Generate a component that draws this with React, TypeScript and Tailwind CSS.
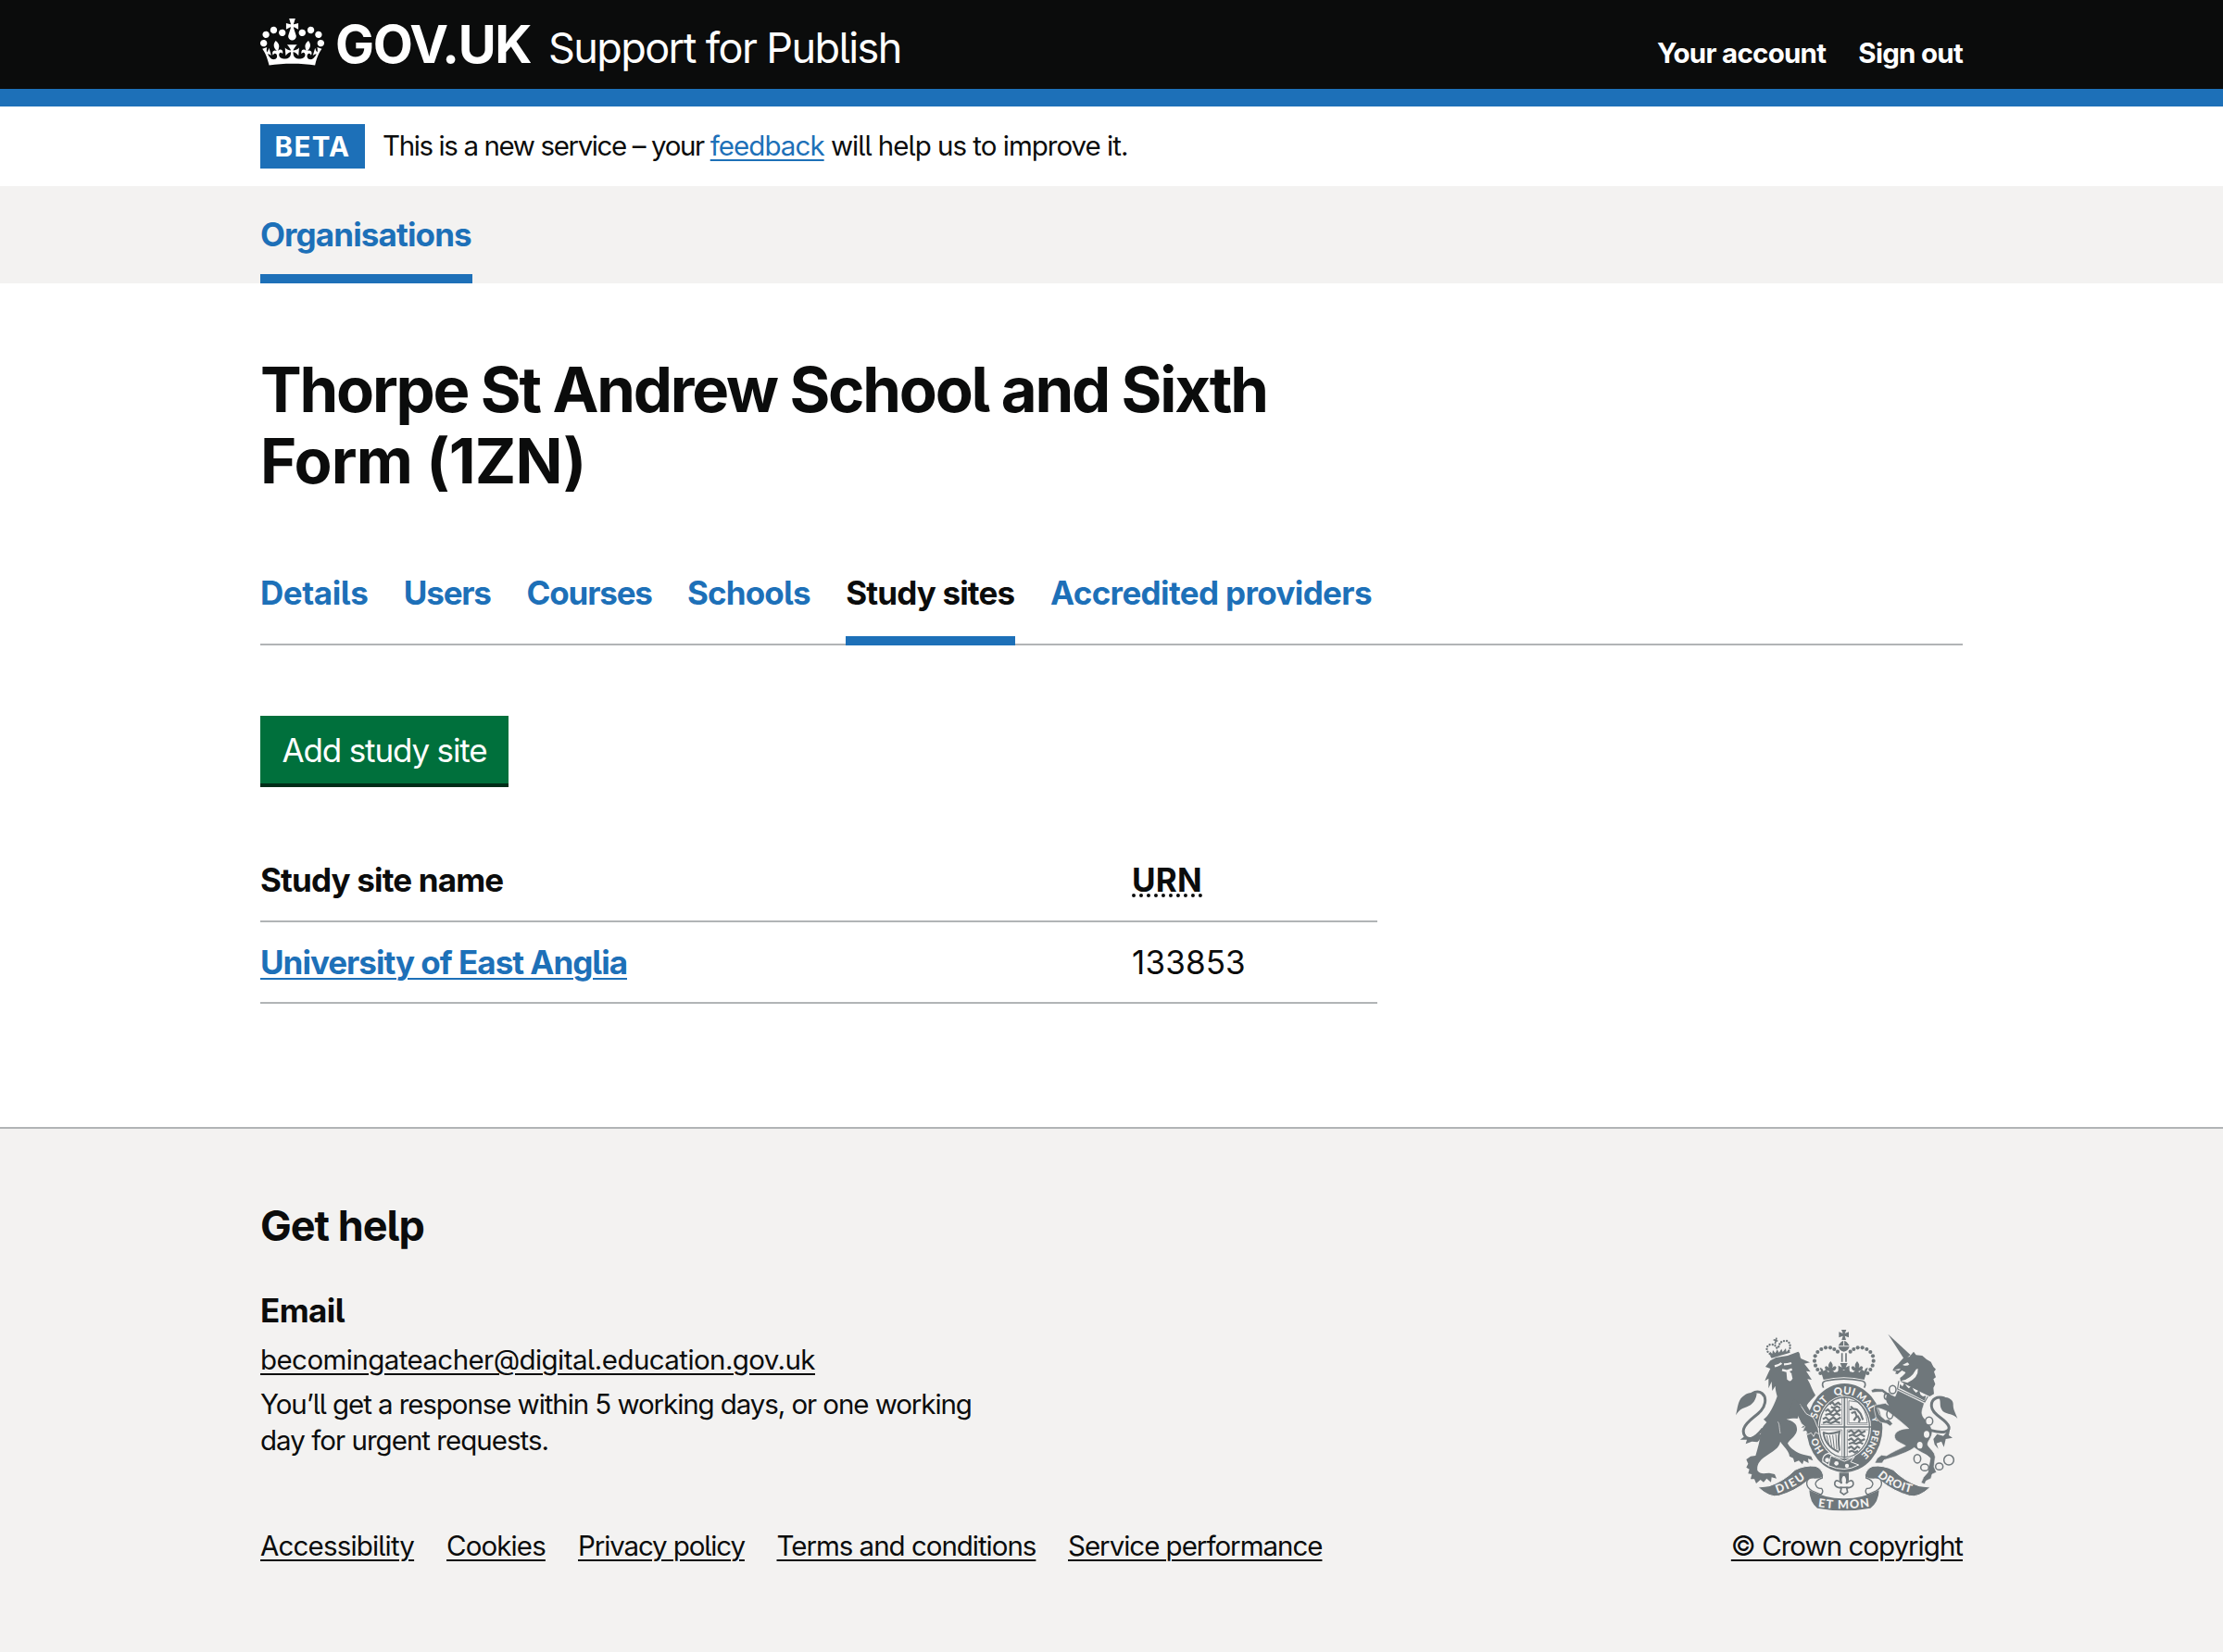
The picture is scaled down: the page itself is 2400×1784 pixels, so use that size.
import type { ReactNode } from "react";

const serviceLinks = ["Your account", "Sign out"];

const tabs = [
  { label: "Details", width: "w-[116.5px]", tracking: "tracking-[-0.012em]" },
  { label: "Users", width: "w-[94.5px]", tracking: "tracking-[-0.034em]" },
  { label: "Courses", width: "w-[135px]", tracking: "tracking-[-0.034em]" },
  { label: "Schools", width: "w-[133px]", tracking: "tracking-[-0.024em]" },
  { label: "Study sites", width: "w-[182.5px]", tracking: "tracking-[-0.024em]", current: true },
  { label: "Accredited providers", width: "w-[348px]", tracking: "tracking-[-0.018em]" },
];

const footerLinks = [
  { label: "Accessibility", tracking: "tracking-[-0.028em]", width: "w-[166px]" },
  { label: "Cookies", tracking: "tracking-[-0.03em]", width: "w-[107px]" },
  { label: "Privacy policy", tracking: "tracking-[-0.038em]", width: "w-[179.5px]" },
  { label: "Terms and conditions", tracking: "tracking-[-0.0345em]", width: "w-[279.5px]" },
  { label: "Service performance", tracking: "tracking-[-0.0345em]", width: "w-[275px]" },
];

const Container = ({ children, className = "" }: { children: ReactNode; className?: string }) => (
  <div className={`mx-auto w-[1838px] ${className}`}>{children}</div>
);

const Crown = () => (
  <svg viewBox="0 0 132 97" preserveAspectRatio="none" className="mt-[20px] h-[51px] w-[69px] shrink-0 self-start fill-white" aria-hidden="true">
    <path
      fillRule="evenodd"
      d="M25 30.2c3.5 1.5 7.7-.2 9.1-3.7 1.5-3.6-.2-7.8-3.9-9.2-3.6-1.4-7.6.3-9.1 3.9-1.4 3.5.3 7.5 3.9 9zM9 39.5c3.6 1.5 7.8-.2 9.2-3.7 1.5-3.6-.2-7.8-3.9-9.1-3.6-1.5-7.6.2-9.1 3.8-1.4 3.5.3 7.5 3.8 9zM4.4 57.2c3.5 1.5 7.7-.2 9.1-3.8 1.5-3.6-.2-7.7-3.9-9.1-3.5-1.5-7.6.3-9.1 3.8-1.4 3.5.3 7.6 3.9 9.1zm38.3-21.4c3.5 1.5 7.7-.2 9.1-3.8 1.5-3.6-.2-7.7-3.9-9.1-3.6-1.5-7.6.3-9.1 3.8-1.3 3.6.4 7.7 3.9 9.1zm64.4-5.6c-3.6 1.5-7.8-.2-9.1-3.7-1.5-3.6.2-7.8 3.8-9.2 3.6-1.4 7.7.3 9.2 3.9 1.3 3.5-.4 7.5-3.9 9zm15.9 9.3c-3.6 1.5-7.7-.2-9.1-3.7-1.5-3.6.2-7.8 3.7-9.1 3.6-1.5 7.7.2 9.2 3.8 1.5 3.5-.3 7.5-3.8 9zm4.7 17.7c-3.6 1.5-7.8-.2-9.2-3.8-1.5-3.6.2-7.7 3.9-9.1 3.6-1.5 7.7.3 9.2 3.8 1.3 3.5-.4 7.6-3.9 9.1zM89.3 35.8c-3.6 1.5-7.8-.2-9.2-3.8-1.4-3.6.2-7.7 3.9-9.1 3.6-1.5 7.7.3 9.2 3.8 1.4 3.6-.3 7.7-3.9 9.1zM69.7 17.7l8.9 4.7V9.3l-8.9 2.8c-.2-.3-.5-.6-.9-.9L72.4 0H59.6l3.5 11.2c-.3.3-.6.5-.9.9l-8.8-2.8v13.1l8.8-4.7c.3.3.6.7.9.9l-5 15.4v.1c-.2.8-.4 1.6-.4 2.4 0 4.1 3.1 7.5 7 8.1h.2c.3 0 .7.1 1 .1.4 0 .7 0 1-.1h.2c4-.6 7.1-4.1 7.1-8.1 0-.8-.1-1.7-.4-2.4V34l-5.1-15.4c.4-.2.7-.6 1-.9zM66 92.8c16.9 0 32.8 1.1 47.1 3.2 4-16.9 8.9-26.7 14-33.5l-9.6-3.4c1 4.9 1.1 7.2 0 10.2-1.5-1.4-3-4.3-4.2-8.7L108.6 76c2.8-2 5-3.2 7.5-3.3-4.4 9.4-10 11.9-13.6 11.2-4.3-.8-6.3-4.6-5.6-7.9 1-4.7 5.7-5.9 8-.5 4.3-8.7-3-11.4-7.6-8.8 7.1-7.2 7.9-13.5 2.1-21.1-8 6.1-8.1 12.3-4.5 20.8-4.7-5.4-12.1-2.5-9.5 6.2 3.4-5.2 7.9-2 7.2 3.1-.6 4.3-6.4 7.8-13.5 7.2-10.3-.9-10.9-8-11.2-13.8 2.5-.5 7.1 1.8 11 7.3L80.2 60c-4.1 4.4-8 5.3-12.3 5.4 1.4-4.4 8-11.6 8-11.6H55.5s6.4 7.2 7.9 11.6c-4.2-.1-8-1-12.3-5.4l1.4 16.4c3.9-5.5 8.5-7.7 10.9-7.3-.3 5.8-.9 12.8-11.1 13.8-7.2.6-12.9-2.9-13.5-7.2-.7-5 3.8-8.3 7.1-3.1 2.7-8.7-4.6-11.6-9.4-6.2 3.7-8.5 3.6-14.7-4.6-20.8-5.8 7.6-5 13.9 2.2 21.1-4.7-2.6-11.9.1-7.7 8.8 2.3-5.5 7.1-4.2 8.1.5.7 3.3-1.3 7.1-5.7 7.9-3.5.7-9-1.8-13.5-11.2 2.5.1 4.7 1.3 7.5 3.3l-4.7-15.4c-1.2 4.4-2.7 7.2-4.3 8.7-1.1-3-.9-5.3 0-10.2l-9.5 3.4c5 6.9 9.9 16.7 14 33.5 14.8-2.1 30.8-3.2 47.7-3.2z"
    />
  </svg>
);

const archBeads: [number, number][] = [
  [346, 187], [337, 175], [330, 162], [327, 147], [329, 131], [337, 118], [349, 109], [363, 104], [378, 104], [391, 109], [402, 117],
];

const RoyalArms = () => (
  <svg viewBox="57 40 750 600" className="h-[200px] w-[250px]" fill="#6f777b" aria-hidden="true">
    <defs>
      <path id="garter" d="M424 471A92 108 0 0 1 424 255A92 108 0 0 1 424 471" />
      <path id="dieu" d="M206 576Q262 558 306 522" />
      <path id="mon" d="M338 620Q422 632 508 618" />
      <path id="droit" d="M531 520Q572 560 652 577" />
    </defs>

    {/* lion's tail */}
    <path d="M72 323C80 292 78 272 100 258C112 248 128 248 140 254C136 282 118 294 102 298C88 302 80 310 72 323Z" />
    <path d="M124 253C150 238 172 256 166 284C160 320 110 332 98 366C92 388 108 402 122 398C136 394 146 384 160 366" fill="none" stroke="#6f777b" strokeWidth="9" />
    <path d="M92 374L102 390L86 402L108 402L104 416L124 408L142 410C150 404 154 394 158 382L140 388L112 398Z" />

    {/* lion */}
    <path d="M184 146L202 136L240 130L274 117C282 122 278 132 284 140L312 152L294 156L314 182L300 180L318 208L304 206C316 226 320 244 330 258C318 272 306 282 302 292L320 322C330 332 334 346 335 362L338 384L326 376L322 390L314 380L302 386L300 374L288 376L294 362L284 364L298 350C290 336 278 328 262 332L236 336C258 342 272 350 270 372C266 392 244 404 240 414C250 432 270 444 290 450L316 456L322 470L306 464L308 478L292 470L288 482L276 470L262 476L258 462L246 456C244 436 226 424 216 408C214 430 190 440 166 458C146 472 140 486 142 502C150 514 162 512 180 510L198 514L204 528L188 524L186 540L172 528L162 540L152 532L138 544L132 530L120 530L124 514L112 512L116 498L106 492L112 480L106 466L120 456L136 454C144 428 150 404 154 376C158 360 166 352 172 346L162 336C182 322 196 290 206 262C202 248 200 238 200 228L190 244L188 214L178 236L178 204L166 212C172 196 178 184 184 172L168 166Z" />
    <path d="M198 164Q214 160 220 154M228 158Q240 158 252 154M222 176L238 180L254 174" fill="none" stroke="#f3f2f1" strokeWidth="7" />
    <path d="M236 184L244 178L252 188L256 204Q248 220 238 206Z" fill="#f3f2f1" />
    <path d="M216 382C212 360 214 352 208 344" fill="none" stroke="#f3f2f1" strokeWidth="2" />

    {/* lion's crown */}
    <path d="M184 132L182 116L190 124L192 112L200 122L206 110L212 120L220 108L224 118L234 106L236 118L244 110L248 120L188 138Z" />
    <path d="M182 124C166 112 172 94 186 94Q200 92 206 108M244 114C254 98 244 78 230 82Q212 84 210 106" fill="none" stroke="#6f777b" strokeWidth="7" strokeLinecap="round" strokeDasharray="0.1 9" />
    <path d="M194 78L208 83M204 72L199 92" stroke="#6f777b" strokeWidth="5" />

    {/* garter and quartered shield */}
    <ellipse cx="424" cy="364" rx="123" ry="144" />
    <ellipse cx="424" cy="362" rx="86" ry="102" fill="#f3f2f1" />
    <ellipse cx="424" cy="362" rx="81" ry="97" fill="none" stroke="#6f777b" strokeWidth="4" />
    <path d="M424 262V462M338 361H510" stroke="#6f777b" strokeWidth="5" />
    <path d="M416 268V353H348M433 268V353H500M416 370V456M348 370H416M433 370H500M433 370V456" fill="none" stroke="#6f777b" strokeWidth="2" />
    <g fill="none" stroke="#6f777b" strokeWidth="6.5" strokeLinejoin="round">
      <path d="M376 288L384 280L392 290L404 282L412 290M380 296L390 300L400 294L410 300" />
      <path d="M362 310L370 304L380 314L392 304L400 312L412 304M362 322L376 318L388 324L398 316L410 324" />
      <path d="M354 336L364 330L374 340L388 330L398 338L412 330M354 348L366 344L380 349L394 342L410 348" />
      <path d="M436 378L446 372L456 382L470 372L480 380L492 374M438 390L450 386L462 392L476 384L490 392" />
      <path d="M436 404L446 398L456 408L468 398L478 406L490 400M438 416L450 412L462 416L474 410L484 416" />
      <path d="M436 430L446 424L456 434L466 424L474 430M438 442L448 438L458 444L468 438" />
      <path d="M444 294L452 302L464 304L476 318L484 338M446 316L458 312L464 326L454 340M466 324L474 338L470 346M440 304L448 304" />
    </g>
    <path d="M438 276L466 280Q494 300 498 348L438 348Z" fill="none" stroke="#6f777b" strokeWidth="2.5" />
    <path d="M354 378Q370 388 408 376Q402 398 408 438M356 380Q362 424 406 442" fill="none" stroke="#6f777b" strokeWidth="6" />
    <path d="M366 388L374 418M376 388L383 426M386 387L391 432M396 384L399 434" stroke="#6f777b" strokeWidth="3" />
    <g fill="#f3f2f1" fontFamily="Lato" fontWeight="900" fontSize="32" textAnchor="middle">
      <text fontSize="31"><textPath href="#garter" startOffset="101">HO</textPath></text>
      <text><textPath href="#garter" startOffset="221">SOIT</textPath></text>
      <text fontSize="34"><textPath href="#garter" startOffset="314">QUI</textPath></text>
      <text fontSize="31"><textPath href="#garter" startOffset="386">MAL</textPath></text>
      <text fontSize="24"><textPath href="#garter" startOffset="446">Y</textPath></text>
      <text fontSize="30"><textPath href="#garter" startOffset="524">PENSE</textPath></text>
    </g>

    {/* lion's foreleg lies over the garter */}
    <path d="M280 288L300 318L322 330C332 344 332 356 338 364L342 384L330 378L324 392L316 380L304 386L300 374L288 376L296 360L284 350L270 320Z" stroke="#f3f2f1" strokeWidth="2.5" />
    <path d="M260 270L284 292L272 334L240 330Z" />

    {/* buckle and strap */}
    <path d="M372 446Q350 452 354 474L374 486L388 454Z" stroke="#f3f2f1" strokeWidth="4" />
    <path d="M380 454L424 472L456 458L444 474L470 484Q424 510 372 486Z" stroke="#f3f2f1" strokeWidth="3" />
    <circle cx="368" cy="468" r="7" fill="#f3f2f1" />
    <circle cx="398" cy="479" r="7" fill="#f3f2f1" />
    <circle cx="432" cy="487" r="6.5" fill="#f3f2f1" />

    {/* imperial crown */}
    <path d="M353 236L348 218Q422 194 496 218L490 238Q480 228 478 224Q422 212 368 226Q362 232 353 236Z" fill="#f3f2f1" />
    <path d="M356 234Q346 214 366 211Q422 200 478 211Q498 214 488 234" fill="none" stroke="#6f777b" strokeWidth="5" />
    <path d="M356 208L344 168L352 172L356 180L364 174L372 184L382 176L392 184L402 182L410 170L422 178L434 170L442 182L452 184L462 176L472 184L480 174L488 180L492 172L500 168L488 208Q422 192 356 208Z" />
    <path d="M379 148Q390 160 384 170Q394 158 398 168Q396 178 384 180L379 186L374 180Q362 178 360 168Q364 158 374 170Q368 160 379 148ZM465 148Q476 160 470 170Q480 158 484 168Q482 178 470 180L465 186L460 180Q448 178 446 168Q450 158 460 170Q454 160 465 148Z" />
    <path d="M410 154L434 154L428 168L440 162V184L428 176H416L404 184V162L416 168Z" />
    <path d="M416 122V150M429 122V150" stroke="#6f777b" strokeWidth="5" />
    {archBeads.map(([x, y]) => (
      <g key={`${x}-${y}`}>
        <circle cx={x} cy={y} r="6.2" />
        <circle cx={845 - x} cy={y} r="6.2" />
      </g>
    ))}
    <path d="M404 98Q422 66 440 98ZM404 101H440Q436 116 422 117Q408 116 404 101Z" />
    <path d="M422 78V98" stroke="#f3f2f1" strokeWidth="3" />
    <path d="M414 46H430L425 58L438 53V71L425 66L429 79H415L419 66L406 71V53L419 58Z" />

    {/* unicorn */}
    <path d="M565 60L638 128L618 142Z" />
    <path d="M618 134L634 134L648 117L656 128L676 130L690 142L704 150L712 166L720 174L714 182L720 200L712 206L718 222L712 234L714 254L700 262L606 216L604 202Q620 190 622 184L610 178L596 190L588 188L592 182L580 178Q582 168 598 156Z" />
    <path d="M612 160L628 152L634 158Q628 166 612 160ZM584 176L606 172L600 178ZM606 212Q640 206 656 174L662 172Q664 202 628 218Z" fill="#f3f2f1" />
    <path d="M602 212L694 262L686 282L598 238Z" fill="#f3f2f1" />
    <path d="M602 234L604 222L612 230L618 218L626 230L632 236L642 228L648 242L656 250L666 242L670 256L678 262L688 260L684 276Z" />
    <path d="M600 212L596 238L684 280L694 262" fill="none" stroke="#6f777b" strokeWidth="3.5" />
    <path d="M596 242L682 284C680 300 668 312 680 330C694 348 706 356 708 376C708 398 690 408 694 420C702 434 716 440 718 458L714 490L722 508L708 514L704 528L688 536L684 546L672 542L680 524L694 508L698 484L702 462C690 448 668 444 650 428C634 440 616 446 590 456L552 468L546 478L522 478L530 462L544 452L560 454C578 442 600 434 622 422C608 412 586 408 586 390C588 374 610 366 632 366C610 346 590 330 566 312C548 304 538 300 530 300L538 322L556 338L568 336L580 350L572 358L560 350L540 346L526 330L520 304L522 290L556 284L566 290C556 278 556 266 560 258L546 248L530 248L514 250L510 242L522 236L548 238L570 254L588 262Z" stroke="#f3f2f1" strokeWidth="2" />
    <path d="M704 372C742 382 766 378 762 360C754 334 708 324 706 294C704 270 724 260 748 268" fill="none" stroke="#6f777b" strokeWidth="9" />
    <path d="M730 266C758 260 778 272 776 290C776 306 784 316 790 334C778 316 750 322 740 306C730 292 738 280 730 266Z" />
    <path d="M724 384L744 390L766 366L762 388L774 396L752 400L746 426L738 408L722 414L728 432L716 418L712 400Z" />

    {/* chain */}
    <g fill="none" stroke="#6f777b" strokeWidth="4.5">
      <ellipse cx="580" cy="240" rx="11" ry="13" />
      <ellipse cx="562" cy="262" rx="9" ry="10" />
      <ellipse cx="571" cy="320" rx="10" ry="15" />
      <ellipse cx="698" cy="342" rx="12" ry="13" fill="#f3f2f1" />
      <ellipse cx="660" cy="464" rx="11" ry="14" />
      <ellipse cx="684" cy="492" rx="13" ry="11" />
      <ellipse cx="731" cy="489" rx="12" ry="11" />
      <circle cx="762" cy="468" r="16" />
    </g>
    <ellipse cx="690" cy="385" rx="9" ry="11" fill="#f3f2f1" />
    <ellipse cx="668" cy="420" rx="9" ry="11" fill="#f3f2f1" />

    {/* motto scroll */}
    <path d="M144 556L180 552Q226 538 264 500Q296 484 330 488Q350 494 356 518L340 530Q318 522 304 536Q262 570 212 584Q182 592 144 556Z" stroke="#f3f2f1" strokeWidth="3" />
    <path d="M702 556L666 552Q620 538 582 500Q550 484 516 488Q496 494 490 518L506 530Q528 522 542 536Q584 570 634 584Q664 592 702 556Z" stroke="#f3f2f1" strokeWidth="3" />
    <path d="M310 566Q366 594 422 593Q478 594 536 566Q534 606 508 624Q422 640 336 624Q312 606 310 566Z" />
    <path d="M352 516Q350 526 328 526Q300 524 302 546Q304 560 320 568L348 580Q358 570 350 560Q334 562 330 546Q330 534 352 526ZM494 516Q496 526 518 526Q546 524 544 546Q542 560 526 568L498 580Q488 570 496 560Q512 562 516 546Q516 534 494 526Z" fill="#f3f2f1" stroke="#6f777b" strokeWidth="4" />
    <g fill="#f3f2f1" fontFamily="Lato" fontWeight="900">
      <text fontSize="37"><textPath href="#dieu" textLength="104">DIEU</textPath></text>
      <text fontSize="38"><textPath href="#mon" textLength="168">ET MON</textPath></text>
      <text fontSize="37"><textPath href="#droit" textLength="122">DROIT</textPath></text>
    </g>

    {/* fleur-de-lis pendant */}
    <path d="M407 509H438V536H407Z" />
    <path d="M422 514Q436 528 430 544Q446 528 452 540Q456 554 438 558H431L434 572L422 580L411 572L414 558H407Q389 554 393 540Q399 528 415 544Q408 528 422 514Z" fill="#f3f2f1" stroke="#6f777b" strokeWidth="5" />
    <path d="M408 557H437" stroke="#6f777b" strokeWidth="5" />
  </svg>
);

const linkClass = "underline decoration-[2px] underline-offset-[4px]";

export default function App() {
  return (
    <div className="flex h-[1784px] flex-col bg-white font-[Inter,sans-serif] text-[35px] text-[#0b0c0c] [font-feature-settings:'cv05']">
      <header className="h-[115px] border-b-[19px] border-[#1d70b8] bg-[#0b0c0c] text-white">
        <Container className="flex h-[96px] items-baseline whitespace-nowrap">
          <Crown />
          <span className="ml-[12px] w-[230px] text-[56px] leading-[97px] font-bold tracking-[-0.024em]">GOV.UK</span>
          <span className="text-[45px] leading-none tracking-[-0.0355em]">Support for Publish</span>
          <nav className="ml-auto flex gap-[35px] text-[29.5px] leading-none font-bold tracking-[-0.025em]">
            {serviceLinks.map((label) => (
              <a key={label}>{label}</a>
            ))}
          </nav>
        </Container>
      </header>

      <Container className="flex h-[86px] shrink-0 items-center text-[29.5px] whitespace-nowrap">
        <strong className="mr-[19px] h-[48px] w-[113px] bg-[#1d70b8] text-center leading-[49px] font-bold tracking-[0.045em] text-white">
          BETA
        </strong>
        <p className="-mt-[1px] tracking-[-0.0335em]">
          <span className="tracking-[-0.047em]">This is a new service – your </span>
          <a className={`text-[#1d70b8] tracking-[-0.032em] ${linkClass}`}>feedback</a> will help us to improve it.
        </p>
      </Container>

      <nav className="h-[105px] shrink-0 bg-[#f3f2f1]">
        <Container className="flex">
          <a className="h-[105px] w-[229px] border-b-[10px] border-[#1d70b8] leading-[105px] font-bold tracking-[-0.025em] text-[#1d70b8]">
            Organisations
          </a>
        </Container>
      </nav>

      <Container className="flex-1 pt-[77px]">
        <h1 className="w-[1206px] text-[67px] leading-[76.5px] font-bold tracking-[-0.033em]">
          Thorpe St Andrew School and Sixth <span className="tracking-[-0.012em]">Form (1ZN)</span>
        </h1>

        <nav className="mt-[57px] flex h-[104px] gap-[38.3px] border-b-2 border-[#b1b4b6] font-bold whitespace-nowrap">
          {tabs.map((tab) => (
            <a
              key={tab.label}
              className={`h-[104px] leading-[94px] ${tab.tracking} ${tab.width} ${
                tab.current ? "border-b-[10px] border-[#1d70b8]" : "text-[#1d70b8]"
              }`}
            >
              {tab.label}
            </a>
          ))}
        </nav>

        <button className="mt-[76px] block h-[77px] w-[268px] border-b-4 border-[#002d18] bg-[#00703c] leading-[74px] tracking-[-0.033em] text-white">
          Add study site
        </button>

        <table className="mt-[57px] w-[1206px] table-fixed border-collapse text-left">
          <thead>
            <tr className="h-[88px] border-b-2 border-[#b1b4b6]">
              <th className="w-[941px] font-bold tracking-[-0.024em]">Study site name</th>
              <th className="font-bold tracking-[0.007em]">
                <abbr title="Unique reference number" className="underline decoration-dotted decoration-[4px] underline-offset-[2px]">
                  URN
                </abbr>
              </th>
            </tr>
          </thead>
          <tbody>
            <tr className="h-[88px] border-b-2 border-[#b1b4b6]">
              <td className="font-bold tracking-[-0.0286em] text-[#1d70b8]">
                <a className={linkClass}>University of East Anglia</a>
              </td>
              <td className="tracking-[0.004em]">133853</td>
            </tr>
          </tbody>
        </table>
      </Container>

      <footer className="h-[567px] shrink-0 border-t-2 border-[#b1b4b6] bg-[#f3f2f1]">
        <Container className="flex items-end justify-between pt-[76px] text-[29.5px] leading-[38.3px] whitespace-nowrap">
          <div>
            <h2 className="text-[45px] leading-[57px] font-bold tracking-[-0.022em]">Get help</h2>
            <h3 className="mt-[39px] text-[35px] leading-[48px] font-bold tracking-[-0.017em]">Email</h3>
            <p className="mt-[10px] tracking-[-0.0196em]">
              <a className={linkClass}>becomingateacher@digital.education.gov.uk</a>
            </p>
            <p className="mt-[10px] tracking-[-0.0365em]">
              You’ll get a response within 5 working days, or one working
              <br />
              <span className="tracking-[-0.033em]">day for urgent requests.</span>
            </p>
            <ul className="mt-[76px] flex gap-[35px]">
              {footerLinks.map((link) => (
                <li key={link.label} className={`${link.width} ${link.tracking}`}>
                  <a className={linkClass}>{link.label}</a>
                </li>
              ))}
            </ul>
          </div>
          <div className="flex w-[250px] flex-col items-end gap-[16px]">
            <RoyalArms />
            <a className={`tracking-[-0.0335em] ${linkClass}`}>© Crown copyright</a>
          </div>
        </Container>
      </footer>
    </div>
  );
}
